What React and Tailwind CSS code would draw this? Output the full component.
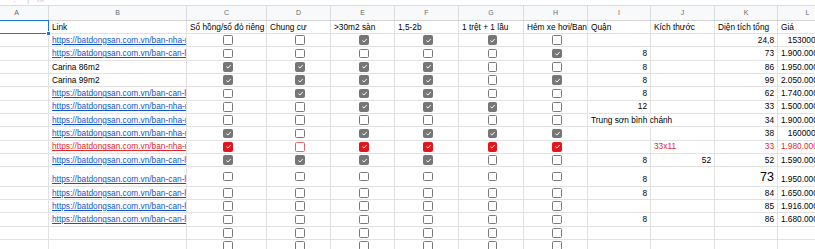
import React from "react";

const cols = [
  { key: "a", label: "A", w: "w-[64px]" },
  { key: "b", label: "B", w: "w-[138px]" },
  { key: "c", label: "C", w: "w-[80px]" },
  { key: "d", label: "D", w: "w-[64px]" },
  { key: "e", label: "E", w: "w-[64px]" },
  { key: "f", label: "F", w: "w-[64px]" },
  { key: "g", label: "G", w: "w-[65px]" },
  { key: "h", label: "H", w: "w-[64px]" },
  { key: "i", label: "I", w: "w-[63px]" },
  { key: "j", label: "J", w: "w-[64px]" },
  { key: "k", label: "K", w: "w-[63px]" },
  { key: "l", label: "L", w: "w-[60px]" },
];

const NHA = "https://batdongsan.com.vn/ban-nha-rieng-quan-8";
const CAN = "https://batdongsan.com.vn/ban-can-ho-chung-cu";

const rows = [
  { b: NHA, link: true, checks: [0, 0, 1, 1, 1, 0], k: "24,8", l: "1530000000" },
  { b: CAN, link: true, checks: [0, 0, 0, 0, 0, 1], i: "8", k: "73", l: "1.900.000.000" },
  { b: "Carina 86m2", checks: [1, 1, 1, 1, 0, 0], i: "8", k: "86", l: "1.950.000.000" },
  { b: "Carina 99m2", checks: [1, 1, 1, 1, 0, 1], i: "8", k: "99", l: "2.050.000.000" },
  { b: CAN, link: true, checks: [0, 1, 1, 1, 0, 0], i: "8", k: "62", l: "1.740.000.000" },
  { b: NHA, link: true, checks: [0, 0, 1, 1, 1, 0], i: "12", k: "33", l: "1.500.000.000" },
  { b: NHA, link: true, checks: [0, 0, 0, 0, 0, 0], iText: "Trung sơn bình chánh", k: "34", l: "1.900.000.000" },
  { b: NHA, link: true, checks: [1, 0, 1, 1, 1, 1], k: "38", l: "1600000000" },
  { b: NHA, link: true, red: true, checks: [1, 0, 1, 1, 1, 1], jText: "33x11", k: "33", l: "1.980.000.000" },
  { b: CAN, link: true, checks: [1, 1, 1, 1, 0, 0], i: "8", j: "52", k: "52", l: "1.590.000.000" },
  { b: CAN, link: true, tall: true, checks: [0, 0, 0, 0, 0, 0], i: "8", k: "73", bigK: true, l: "1.950.000.000" },
  { b: CAN, link: true, checks: [0, 0, 0, 0, 0, 0], i: "8", k: "84", l: "1.650.000.000" },
  { b: CAN, link: true, checks: [0, 0, 0, 0, 0, 0], k: "85", l: "1.916.000.000" },
  { b: CAN, link: true, checks: [0, 0, 0, 0, 0, 0], i: "8", k: "86", l: "1.680.000.000" },
  { checks: [0, 0, 0, 0, 0, 0] },
  { checks: [0, 0, 0, 0, 0, 0] },
];

const headers = ["Sổ hồng/sổ đỏ riêng", "Chung cư", ">30m2 sàn", "1,5-2b", "1 trệt + 1 lầu", "Hẻm xe hơi/Ban công"];

function Check({ on, red }) {
  let cls = "border-[1.5px] border-[#7a7a7a] bg-white";
  if (on && red) cls = "border-[1.5px] border-[#e8141c] bg-[#e8141c]";
  else if (on) cls = "border-[1.5px] border-[#767676] bg-[#767676]";
  else if (red) cls = "border-[1.5px] border-[#e5646a] bg-white";
  return (
    <div className={`w-[9.5px] h-[9.5px] rounded-[1.5px] flex items-center justify-center ${cls}`}>
      {on ? (
        <svg viewBox="0 0 10 10" className="w-[7px] h-[7px]">
          <polyline points="2,5.2 4.2,7.2 8.2,2.8" fill="none" stroke="white" strokeWidth="1.4" />
        </svg>
      ) : null}
    </div>
  );
}

function Cell({ w, children, align = "left", noBorder, overflow, center }) {
  return (
    <div
      className={`${w} shrink-0 h-full border-b border-[#e2e2e2] ${noBorder ? "" : "border-r"} flex ${
        center ? "items-center justify-center" : "items-end pb-[1.5px]"
      } ${align === "right" ? "justify-end pr-[3px]" : "pl-[3px]"} ${overflow ? "overflow-visible" : "overflow-hidden"} whitespace-nowrap`}
    >
      {children}
    </div>
  );
}

export default function App() {
  const txt = "text-[8.3px] leading-[10px]";
  return (
    <div className="w-[815px] h-[249px] overflow-hidden bg-white font-['Liberation_Sans',Arial,sans-serif] text-black">
      <div className="h-[6px] overflow-hidden border-b border-[#dadce0] relative">
        <div className="flex gap-[8px] pl-[10px] text-[9px] leading-[9px] -mt-[5px] text-[#c9c9c9]">
          <span>⋮</span>
          <span>|</span>
          <span className="italic">fx</span>
        </div>
      </div>
      <div className="-ml-[15px] flex flex-col">
        <div className="flex h-[14.7px] bg-[#f8f9fa] border-b border-[#d4d4d4]">
          {cols.map((c) => (
            <div
              key={c.key}
              className={`${c.w} shrink-0 h-full border-r border-[#dadce0] flex items-center justify-center text-[7px] text-[#6a6a6a]`}
            >
              {c.label}
            </div>
          ))}
        </div>

        <div className={`flex h-[13.33px] ${txt}`}>
          <div className="w-[64px] shrink-0 h-full relative border-b border-r border-[#e2e2e2]">
            <div className="absolute -top-[1px] left-0 right-[-1px] bottom-[-1px] border-[1.5px] border-[#1a73e8]" />
            <div className="absolute right-[-3px] bottom-[-3px] w-[5px] h-[5px] bg-[#1a73e8] border border-white" />
          </div>
          <Cell w="w-[138px]">Link</Cell>
          {headers.map((h, idx) => (
            <Cell key={h} w={cols[idx + 2].w}>
              {h}
            </Cell>
          ))}
          <Cell w="w-[63px]">Quận</Cell>
          <Cell w="w-[64px]">Kích thước</Cell>
          <Cell w="w-[63px]">Diện tích tổng</Cell>
          <Cell w="w-[60px]">Giá</Cell>
        </div>

        {rows.map((r, ri) => {
          const color = r.red ? "text-[#e0282e]" : "text-black";
          return (
            <div key={ri} className={`flex ${r.tall ? "h-[19.4px]" : "h-[13.33px]"} ${txt} ${color}`}>
              <Cell w="w-[64px]" />
              <Cell w="w-[138px]">
                {r.b ? (
                  <span className={r.link ? (r.red ? "underline text-[#e0282e]" : "underline text-[#1155cc]") : ""}>{r.b}</span>
                ) : null}
              </Cell>
              {r.checks.map((on, ci) => (
                <Cell key={ci} w={cols[ci + 2].w} center>
                  <Check on={!!on} red={r.red} />
                </Cell>
              ))}
              {r.iText ? (
                <Cell w="w-[63px]" overflow noBorder>
                  {r.iText}
                </Cell>
              ) : (
                <Cell w="w-[63px]" align="right">
                  {r.i}
                </Cell>
              )}
              {r.jText ? (
                <Cell w="w-[64px]">{r.jText}</Cell>
              ) : (
                <Cell w="w-[64px]" align="right">
                  {r.j}
                </Cell>
              )}
              <Cell w="w-[63px]" align="right">
                {r.bigK ? <span className="text-[12.5px] leading-[14px]">{r.k}</span> : r.k}
              </Cell>
              <Cell w="w-[60px]" align="right" overflow>
                {r.l}
              </Cell>
            </div>
          );
        })}
      </div>
    </div>
  );
}
